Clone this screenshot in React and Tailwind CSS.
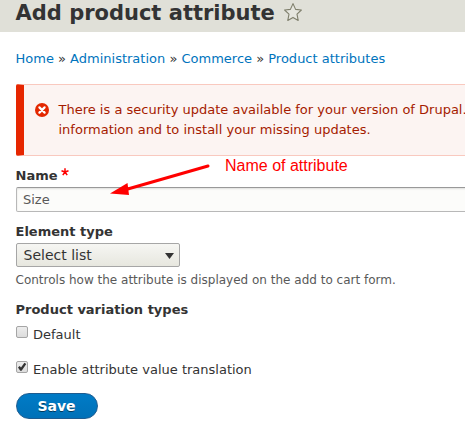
import React from "react";

const crumbs = ["Home", "Administration", "Commerce", "Product attributes"];

function Checkbox({ checked }) {
  return (
    <span className="relative h-3 w-3 shrink-0 rounded-[2px] border border-[#a5a5a5] bg-gradient-to-b from-[#ededed] to-[#dcdcdc]">
      {checked && (
        <svg className="absolute -left-px -top-px" width="12" height="12" viewBox="0 0 12 12">
          <path d="M2 6.4 3.7 5 5 6.6 8.4 1.8 10.3 2.9 5.6 9.8 4.2 9.8Z" fill="#333" />
        </svg>
      )}
    </span>
  );
}

function CheckRow({ label, checked }) {
  return (
    <label className="flex h-5 whitespace-nowrap leading-[18px]">
      <Checkbox checked={checked} />
      <span className="ml-[5px]">{label}</span>
    </label>
  );
}

export default function App() {
  return (
    <div className="relative h-[431px] w-[465px] overflow-hidden bg-white font-['DejaVu_Sans',sans-serif] text-[13px] text-[#333]">
      <header className="flex h-8 bg-[#e0e0d8] pl-[15.5px]">
        <h1 className="h-6 whitespace-nowrap text-[21px] font-bold leading-[26px]">Add product attribute</h1>
        <svg className="ml-[8.5px] mt-[2px]" width="20" height="20" viewBox="0 0 20 20">
          <path
            d="M10 1.6 12.6 7.4 18.4 8 14 12.2 15.2 18.4 10 15.4 4.8 18.4 6 12.2 1.6 8 7.4 7.4Z"
            fill="#e6e6df"
            stroke="#7f7f6c"
            strokeWidth="1.1"
            strokeLinejoin="round"
          />
        </svg>
      </header>

      <nav className="ml-[15.5px] mt-[17px] h-5 whitespace-nowrap leading-5">
        {crumbs.map((c, i) => (
          <React.Fragment key={c}>
            {i > 0 && " » "}
            <a className="text-[#0074bd]">{c}</a>
          </React.Fragment>
        ))}
      </nav>

      <section className="ml-4 mt-[15px] flex h-[72px] w-[480px] rounded-[2px] border-y border-l-8 border-y-[#f9c9bf] border-l-[#e62600] bg-[#fcf4f2] pl-[11px] pt-[15px] text-[#a51b00]">
        <svg className="mt-[3px] shrink-0" width="14" height="14" viewBox="0 0 14 14">
          <circle cx="7" cy="7" r="7" fill="#e32700" />
          <path d="m4.4 4.4 5.2 5.2m0-5.2-5.2 5.2" stroke="#fff" strokeWidth="2.2" strokeLinecap="round" />
        </svg>
        <p className="ml-[9.5px] whitespace-nowrap leading-5">
          There is a security update available for your version of Drupal.
          <br />
          information and to install your missing updates.
        </p>
      </section>

      <form className="ml-4 mt-[9px]">
        <div className="flex h-[22px] font-bold leading-[22px]">
          <span className="-ml-[0.5px]">Name</span>
          <svg className="ml-[3px] mt-[3px]" width="8" height="8" viewBox="0 0 8 8">
            <path d="M4 4V.2M4 4 .5 2.8M4 4l3.5-1.2M4 4 1.8 7.2M4 4l2.2 3.2" stroke="#f00" strokeWidth="1.5" />
          </svg>
        </div>
        <div className="h-[25px] w-[480px] rounded-[2px] border border-[#b8b8b8] border-t-[#999] bg-[#fcfcfa] pl-[6px] leading-[24px] text-[#595959] shadow-[inset_0_1px_2px_rgba(0,0,0,0.12)]">
          Size
        </div>

        <div className="-ml-[0.5px] mt-[9px] h-[22px] font-bold leading-[22px]">Element type</div>
        <div className="flex h-6 w-[164px] items-center justify-between rounded-[2px] border border-[#a6a6a6] bg-gradient-to-b from-[#f6f6f3] to-[#e7e7df] pl-[6.5px] pr-[5px] text-[14px]">
          Select list
          <svg className="mt-[2px]" width="9" height="6" viewBox="0 0 9 6">
            <path d="M0 0h9L4.5 6Z" fill="#333" />
          </svg>
        </div>
        <div className="-ml-[0.5px] mt-1 h-[18px] whitespace-nowrap text-[12px] leading-[18px] text-[#595959]">
          Controls how the attribute is displayed on the add to cart form.
        </div>

        <div className="-ml-[0.5px] mt-[11px] h-5 font-bold leading-5">Product variation types</div>
        <div className="mt-[6px] flex flex-col gap-[15px]">
          <CheckRow label="Default" />
          <CheckRow label="Enable attribute value translation" checked />
        </div>
        <button
          type="button"
          className="mt-3 block h-[26px] w-[82px] rounded-full border border-[#1e5c90] bg-gradient-to-b from-[#007bc6] to-[#0071b8] pr-px text-center text-[14px] font-bold leading-6 text-white [text-shadow:0_1px_rgba(0,0,0,0.5)]"
        >
          Save
        </button>
      </form>

      <svg className="absolute left-[105px] top-[155px]" width="110" height="45" viewBox="0 0 110 45">
        <path d="M21 34.5 103 11" stroke="#f00" strokeWidth="3" strokeLinecap="round" />
        <path d="M5 38.5 22.5 28 24 40Z" fill="#f00" />
      </svg>
      <span className="absolute left-[225px] top-[156px] whitespace-nowrap font-['Liberation_Sans',sans-serif] text-[16px] leading-5 text-[#f00]">
        Name of attribute
      </span>
    </div>
  );
}
